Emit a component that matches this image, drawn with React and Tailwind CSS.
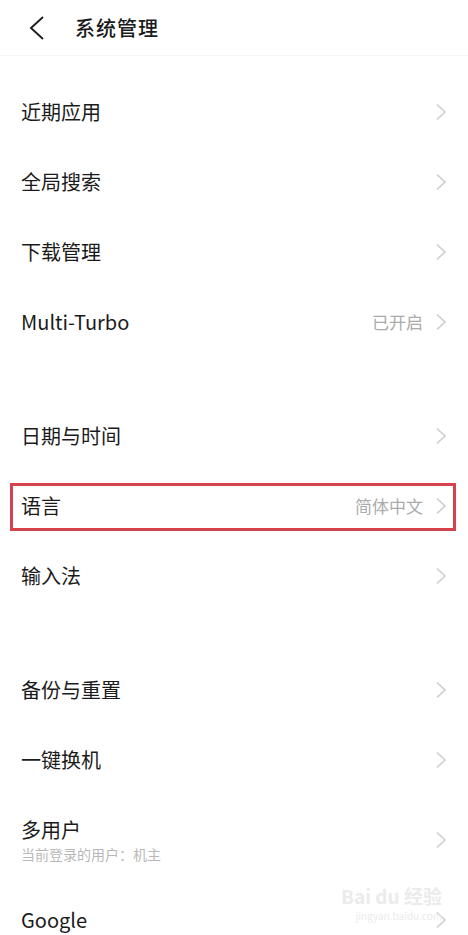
const sections = [
  [
    { label: "近期应用" },
    { label: "全局搜索" },
    { label: "下载管理" },
    { label: "Multi-Turbo", value: "已开启" },
  ],
  [
    { label: "日期与时间" },
    { label: "语言", value: "简体中文", marked: true },
    { label: "输入法" },
  ],
  [
    { label: "备份与重置" },
    { label: "一键换机" },
    { label: "多用户", sub: "当前登录的用户：机主" },
    { label: "Google" },
  ],
];

function Chevron() {
  return (
    <svg width="12" height="18" viewBox="0 0 12 18" className="shrink-0">
      <path d="M2 1.5 L10 9 L2 16.5" fill="none" stroke="#cdcdcd" strokeWidth="1.6" />
    </svg>
  );
}

function Row({ item }) {
  return (
    <div
      className={`relative flex items-center pl-[21px] pr-[21px] ${item.sub ? "h-[90px]" : "h-[70px]"}`}
    >
      {item.marked && (
        <div className="absolute left-[10px] right-[12px] top-[12px] bottom-[10px] border-[3px] border-[#d7434d]" />
      )}
      <div className="flex-1">
        <div className="text-[20px] leading-[26px] text-[#1b1b1b]">{item.label}</div>
        {item.sub && (
          <div className="mt-[2px] text-[14px] leading-[18px] text-[#b8b8b8]">{item.sub}</div>
        )}
      </div>
      {item.value && (
        <span className="mr-[12px] text-[17px] text-[#ababab]">{item.value}</span>
      )}
      <Chevron />
    </div>
  );
}

export default function App() {
  return (
    <div
      className="relative h-[935px] w-[468px] overflow-hidden bg-white"
      style={{ fontFamily: '"Noto Sans CJK SC", "Noto Sans", sans-serif' }}
    >
      <header className="flex h-[56px] items-center border-b border-[#f6f6f6]">
        <svg width="20" height="26" viewBox="0 0 20 26" className="ml-[27px]">
          <path d="M16 2 L4 13 L16 24" fill="none" stroke="#222" strokeWidth="2" />
        </svg>
        <h1 className="ml-[28px] text-[20px] font-medium tracking-[1px] text-[#1b1b1b]">系统管理</h1>
      </header>

      <main className="flex flex-col gap-[44px] pt-[21px]">
        {sections.map((rows, i) => (
          <section key={i}>
            {rows.map((item) => (
              <Row key={item.label} item={item} />
            ))}
          </section>
        ))}
      </main>

      <div className="pointer-events-none absolute right-[26px] top-[886px] flex flex-col items-end gap-[4px] text-[#ebebeb]">
        <div className="text-[19px] font-bold leading-[20px]">Bai du 经验</div>
        <div className="text-[10px] leading-[12px]">jingyan.baidu.com</div>
      </div>
    </div>
  );
}
